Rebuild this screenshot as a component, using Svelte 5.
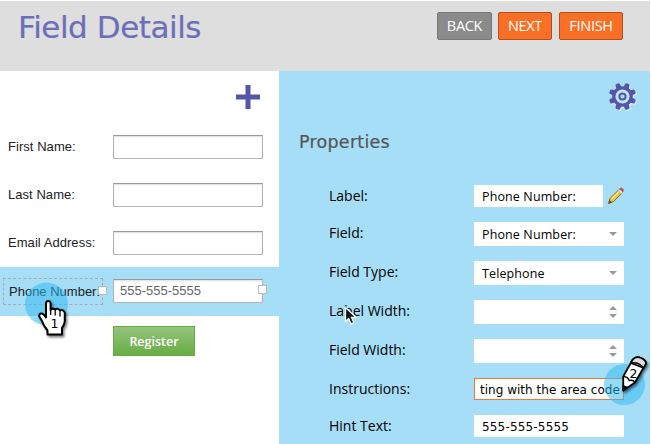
<script>
  const fields = [
    { label: 'First Name:' },
    { label: 'Last Name:' },
    { label: 'Email Address:' },
    { label: 'Phone Number:', hint: '555-555-5555', selected: true }
  ];

  const properties = [
    { label: 'Label:', value: 'Phone Number:', kind: 'label', gap: 15 },
    { label: 'Field:', value: 'Phone Number:', kind: 'select', gap: 15 },
    { label: 'Field Type:', value: 'Telephone', kind: 'select', gap: 15 },
    { label: 'Label Width:', value: '', kind: 'spinner', gap: 15 },
    { label: 'Field Width:', value: '', kind: 'spinner', gap: 15 },
    { label: 'Instructions:', value: 'ting with the area code', kind: 'active', gap: 15 },
    { label: 'Hint Text:', value: '555-555-5555', kind: 'text', gap: 0 }
  ];

  const teeth = [22.5, 67.5, 112.5, 157.5, 202.5, 247.5, 292.5, 337.5];
</script>

<div class="app">
  <header>
    <h1>Field Details</h1>
    <nav>
      <button class="back">BACK</button>
      <button class="next">NEXT</button>
      <button class="finish">FINISH</button>
    </nav>
  </header>

  <main>
    <section class="form">
      <div class="add">
        <svg width="24" height="24" viewBox="0 0 24 24">
          <path d="M9.5 0h5v9.5H24v5h-9.500V24h-5v-9.500H0v-5h9.500z" fill="#5556a8" />
        </svg>
      </div>
      {#each fields as field}
        <div class="row" class:selected={field.selected}>
          <span class="name">{field.label}{#if field.selected}<i class="handle"></i>{/if}</span>
          <span class="box">{field.hint ?? ''}{#if field.selected}<i class="handle"></i>{/if}</span>
        </div>
      {/each}
      <button class="register">Register</button>
    </section>

    <section class="props">
      <div class="gear">
        <svg width="30" height="30" viewBox="-15.5 -15.5 30 30">
          <g fill="#fff" opacity=".55" transform="translate(.7 .7)">
            <circle r="11" />
            {#each teeth as angle}
              <path d="M-3-9L-2.700-14H2.700L3-9z" transform="rotate({angle})" />
            {/each}
          </g>
          <g fill="#5556a8">
            <circle r="10.300" />
            {#each teeth as angle}
              <path d="M-3-8L-2.300-12.800Q-2.200-13.700-1.300-13.700H1.300Q2.200-13.700 2.300-12.800L3-8z" transform="rotate({angle})" />
            {/each}
          </g>
          <circle r="7" fill="#c2e7f9" />
          <circle r="3.100" fill="#a6ddf7" stroke="#5556a8" stroke-width="2" />
        </svg>
      </div>
      <h2>Properties</h2>
      {#each properties as p}
        <div class="prop" style="margin-bottom: {p.gap}px">
          <span class="caption">{p.label}</span>
          <span class="control {p.kind}">
            <span class="value">{p.value}</span>
            {#if p.kind === 'select'}
              <svg class="arrows" width="8" height="4" viewBox="0 0 8 4"><path d="M0 0h8L4 4z" fill="#999" /></svg>
            {:else if p.kind === 'spinner'}
              <svg class="arrows" width="8" height="12" viewBox="0 0 8 12"><path d="M0 4h8L4 0zM0 8h8l-4 4z" fill="#999" /></svg>
            {/if}
          </span>
          {#if p.kind === 'label'}
            <svg class="edit" width="18" height="18" viewBox="0 0 18 18">
              <path d="M1.500 16.500L3 11.500 12 2.500l3.500 3-9 9z" fill="#f2c53c" stroke="#8b6a22" />
              <path d="M5 11.500l7.500-7.500" stroke="#ffe98e" stroke-width="1.500" />
              <path d="M1.500 16.500l1-3.500 2.500 2.500z" fill="#5a4630" />
              <path d="M11 3.500l1.500-1.500 3.500 3-1.500 1.700z" fill="#eee" stroke="#999" stroke-width=".6" />
              <path d="M12.500 2q1-1.500 2.700-.7 2 1.200.8 3.500z" fill="#d9534a" stroke="#a83a35" stroke-width=".6" />
            </svg>
          {/if}
        </div>
      {/each}
    </section>
  </main>

  <svg class="overlay pointer" width="14" height="21" viewBox="0 0 14 21">
    <path d="M1.500 1.500v14l3.200-3 2.300 5.300 2.800-1.200-2.300-5.200H12z" fill="#111" stroke="#fff" stroke-width="1.300" />
  </svg>

  <svg class="overlay hand" width="54" height="62" viewBox="0 0 54 62">
    <defs>
      <filter id="shade" x="-30%" y="-30%" width="170%" height="170%" color-interpolation-filters="sRGB">
        <feDropShadow dx="1.500" dy="2" stdDeviation="1.300" flood-color="#000" flood-opacity=".5" />
      </filter>
    </defs>
    <circle cx="22.500" cy="22" r="21.500" fill="#32baf2" opacity=".52" />
    <path filter="url(#shade)" d="M22 35V21.500Q22 19 24.200 19T26.600 21.500V28Q28 25.700 31 27.300 33.500 25.700 36 28.400 39 27 40.800 30.500V39Q40.500 43 38 46V52.500H23.500V48.500Q19.500 44 18 39L15.500 35Q14.500 32 17 31.500T22 35.500z" fill="#fff" stroke="#000" stroke-width="2" stroke-linejoin="round" />
    <path d="M26.700 27v6M31.200 28v5.500M36 29v5.500" stroke="#000" stroke-width="1.300" />
    <text x="30.500" y="46" text-anchor="middle">1</text>
  </svg>

  <svg class="overlay pencil" width="50" height="54" viewBox="0 0 50 54">
    <circle cx="22.500" cy="33.500" r="20.500" fill="#32baf2" opacity=".52" />
    <g filter="url(#shade)" stroke="#000" stroke-width="1.800" stroke-linejoin="round">
      <path d="M21.300 39.500L21.200 25.500 30.800 8.500Q34 4.800 39 7T44 12.500L33 31.500z" fill="#fff" />
      <path d="M28.800 12L30.800 8.500Q34 4.800 39 7T44 12.500L41.700 17z" fill="#dedede" />
      <path d="M21.200 25.500q5 .3 6 4 4.500-1 5.800 2M28.800 12q8-1.500 12.900 5" fill="none" stroke-width="1.500" />
      <path d="M21.300 35v4.500l4-3z" fill="#000" />
    </g>
    <text x="31.500" y="26.500" text-anchor="middle">2</text>
  </svg>
</div>

<style>
  :global(body) { background: #fff; overflow: hidden; }
  .app { position: relative; width: 650px; height: 443px; padding-top: 1px; overflow: hidden; font-family: "Open Sans", "Noto Sans", sans-serif; }
  header { display: flex; justify-content: space-between; height: 70px; box-sizing: border-box; padding: 11px 27px 0 18px; background: #dedede; }
  h1 { margin: -3px 0 0; font: 31px/36px "DejaVu Sans", sans-serif; letter-spacing: -0.45px; color: #6b6fb8; -webkit-text-stroke: .2px #6b6fb8; white-space: nowrap; }
  nav { display: flex; }
  button { margin: 0; padding: 0; font-family: inherit; color: #fff; box-sizing: border-box; }
  nav button { height: 28px; border: 1px solid #b04f1d; border-radius: 2px; background: #f96f25; font-size: 14.500px; line-height: 26px; letter-spacing: -0.3px; }
  nav .back { width: 55px; margin-right: 6px; background: #8b8b8b; border-color: #777; }
  .next { width: 54px; margin-right: 7px; }
  .finish { width: 64px; }
  main { display: flex; height: 373px; }
  .form { width: 279px; }
  .add { height: 52px; padding: 14px 0 0 236px; box-sizing: border-box; }
  .add svg, .gear svg { display: block; }
  .row { display: flex; align-items: center; height: 48px; padding-left: 3px; box-sizing: border-box; font: 13px "Liberation Sans", sans-serif; color: #222; }
  .row.selected { height: 49px; background: #a6ddf7; }
  .name { position: relative; width: 100px; height: 27px; line-height: 26px; padding-left: 5px; box-sizing: border-box; margin-right: 10px; white-space: nowrap; letter-spacing: .05px; }
  .selected .name { border: 1px dashed #aaa; line-height: 25px; letter-spacing: 0; }
  .box { position: relative; width: 150px; height: 24px; box-sizing: border-box; border: 1px solid #b5b5b5; border-top-color: #999; background: #fff; box-shadow: inset 0 1px 2px #ddd; padding-left: 6px; line-height: 21px; color: #666; }
  .selected .box { margin-top: -1px; }
  .handle { position: absolute; right: -5px; top: 7px; width: 9px; height: 9px; box-sizing: border-box; border: 1px solid #bbb; background: #fff; }
  .box .handle { top: 5px; }
  .register { display: block; width: 82px; height: 30px; margin: 10px 0 0 113px; border: 1px solid #68ab41; background: linear-gradient(#93c47d, #69ad43); font-size: 12.500px; font-weight: 600; line-height: 30px; }
  .props { width: 371px; background: #a6ddf7; }
  .gear { height: 57px; padding: 10px 0 0 328px; box-sizing: border-box; }
  h2 { margin: 0; padding-left: 20px; height: 57px; font: 17.500px/28px "DejaVu Sans", sans-serif; letter-spacing: .25px; color: #555; -webkit-text-stroke: .2px #555; }
  .prop { display: flex; padding-left: 50px; color: #000; font-size: 14px; }
  .caption { width: 145px; line-height: 22px; white-space: nowrap; }
  .control { width: 150px; height: 24px; display: flex; align-items: center; justify-content: space-between; box-sizing: border-box; padding: 0 7px 0 8px; background: #fff; color: #000; }
  .value { font-size: 12.500px; letter-spacing: .12px; line-height: 22px; padding-top: 2px; white-space: nowrap; }
  .label, .text, .active { height: 22px; }
  .label { width: 129px; }
  .active { border: 1px solid #f07833; padding: 0 3px 0 5px; }
  .active .value, .text .value { font-family: "DejaVu Sans", sans-serif; font-size: 12px; letter-spacing: .02px; }
  .text .value { letter-spacing: .17px; }
  .edit { margin: 2px 0 0 4px; }
  .overlay { position: absolute; }
  .overlay text { font: 12.500px "DejaVu Sans", sans-serif; fill: #000; }
  .pointer { left: 344px; top: 306px; }
  .hand { left: 24px; top: 282px; }
  .pencil { left: 602px; top: 351px; }
</style>
